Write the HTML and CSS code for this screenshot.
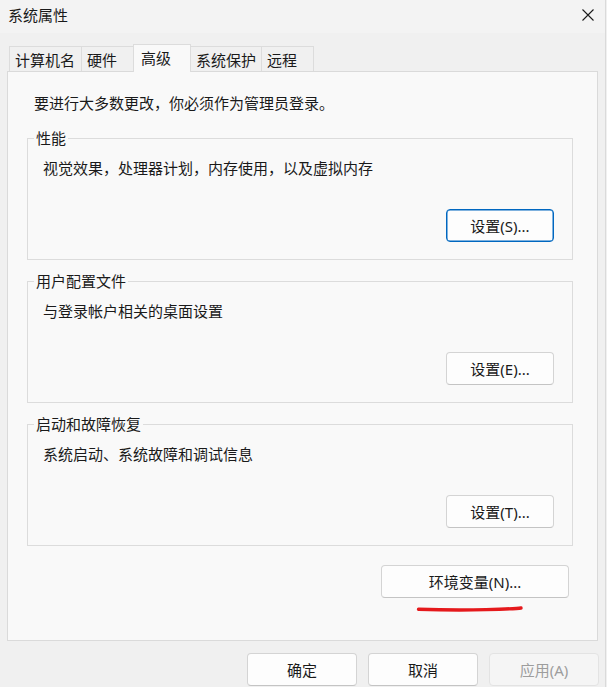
FILE: index.html
```html
<!DOCTYPE html>
<html lang="zh-CN">
<head>
<meta charset="utf-8">
<title>系统属性</title>
<link rel="stylesheet" href="styles.css">
</head>
<body>
<div class="window">
  <div class="titlebar">
    <span class="title">系统属性</span>
    <span class="close" aria-label="关闭">
      <svg width="12" height="12" viewBox="0 0 12 12"><path d="M0.5 0.5 L11.5 11.5 M11.5 0.5 L0.5 11.5" stroke="#1b1b1b" stroke-width="1.1" fill="none"/></svg>
    </span>
  </div>

  <div class="tabs">
    <div class="tab tab-computer">计算机名</div>
    <div class="tab tab-hardware">硬件</div>
    <div class="tab tab-advanced active">高级</div>
    <div class="tab tab-protect">系统保护</div>
    <div class="tab tab-remote">远程</div>
  </div>

  <div class="panel">
    <p class="intro">要进行大多数更改，你必须作为管理员登录。</p>

    <fieldset class="group">
      <legend>性能</legend>
      <p class="desc">视觉效果，处理器计划，内存使用，以及虚拟内存</p>
      <div class="group-actions"><button class="btn btn-default">设置(S)...</button></div>
    </fieldset>

    <fieldset class="group">
      <legend>用户配置文件</legend>
      <p class="desc">与登录帐户相关的桌面设置</p>
      <div class="group-actions"><button class="btn">设置(E)...</button></div>
    </fieldset>

    <fieldset class="group">
      <legend>启动和故障恢复</legend>
      <p class="desc">系统启动、系统故障和调试信息</p>
      <div class="group-actions"><button class="btn">设置(T)...</button></div>
    </fieldset>

    <div class="env-row"><button class="btn btn-env">环境变量(N)...</button></div>
    <div class="mark-row">
      <svg width="108" height="7" viewBox="0 0 108 7"><path d="M2.5 4.3 Q 40 5.4 70 4.6 T 105 3" stroke="#e5191c" stroke-width="3.4" stroke-linecap="round" fill="none"/></svg>
    </div>
  </div>

  <div class="footer">
    <button class="btn btn-footer">确定</button>
    <button class="btn btn-footer">取消</button>
    <button class="btn btn-footer btn-disabled" disabled>应用(A)</button>
  </div>
</div>
</body>
</html>
```

FILE: styles.css
```css
* { box-sizing: border-box; }

html, body {
  margin: 0;
  padding: 0;
  background: #f0f0f0;
  height: 687px;
  overflow: hidden;
}

body {
  font-family: "Noto Sans", "Noto Sans CJK SC", sans-serif;
  font-size: 15px;
  line-height: 20px;
  color: #1a1a1a;
}

.window {
  width: 606px;
  height: 687px;
  border-right: 1px solid #dadada;
  background: #f0f0f0;
}

.titlebar {
  height: 33px;
  background: #f3f3f3;
  display: flex;
  align-items: flex-start;
  justify-content: space-between;
  padding: 5px 0 0 8px;
}

.title {
  font-family: "Noto Sans CJK SC", sans-serif;
}

.close {
  display: flex;
  width: 12px;
  height: 12px;
  margin: 4px 11px 0 0;
}

.tabs {
  display: flex;
  align-items: flex-end;
  margin-top: 11px;
  padding-left: 9px;
  height: 27px;
}

.tab {
  height: 25px;
  border: 1px solid #dcdcdc;
  border-bottom: none;
  margin-right: -1px;
  padding: 3px 0 0 5px;
  background: #f0f0f0;
  white-space: nowrap;
  font-family: "Noto Sans CJK SC", sans-serif;
}

.tab-computer { width: 73px; }
.tab-hardware { width: 53px; }
.tab-advanced { width: 58px; }
.tab-protect { width: 72px; }
.tab-remote { width: 53px; }

.tab.active {
  height: 28px;
  margin-bottom: -1px;
  padding-left: 7px;
  background: #f9f9f9;
  position: relative;
  z-index: 1;
}

.panel {
  margin: 0 7px 0 7px;
  height: 570px;
  border: 1px solid #dadada;
  background: #f9f9f9;
  padding-top: 21px;
}

.intro {
  margin: 0 0 15px 26px;
  font-family: "Noto Sans CJK SC", sans-serif;
}

.group {
  margin: 0 24px 11px 19px;
  padding: 0 18px 17px 15px;
  border: 1px solid #dcdcdc;
  min-inline-size: 0;
}

.group legend {
  margin-left: -9px;
  padding: 0 2px;
  font-family: "Noto Sans CJK SC", sans-serif;
}

.desc {
  margin: 10px 0 0 0;
  font-family: "Noto Sans CJK SC", sans-serif;
}

.group-actions {
  display: flex;
  justify-content: flex-end;
  margin-top: 31px;
}

.btn {
  font-family: "Noto Sans", "Noto Sans CJK SC", sans-serif;
  font-size: 15px;
  line-height: 20px;
  color: #1a1a1a;
  height: 33px;
  width: 108px;
  padding: 0;
  background: #fdfdfd;
  border: 1px solid #d4d4d4;
  border-bottom-color: #c4c4c4;
  border-radius: 4px;
}

.btn-default {
  border: 1px solid #0067c0;
  box-shadow: inset 0 0 0 0.5px #0067c0;
}

.env-row {
  display: flex;
  justify-content: flex-end;
  margin: 19px 28px 0 0;
}

.btn-env {
  width: 188px;
}

.mark-row {
  display: flex;
  justify-content: flex-end;
  margin: 7px 73px 0 0;
}

.mark-row svg { display: block; }

.footer {
  display: flex;
  justify-content: flex-end;
  gap: 11px;
  margin: 12px 6px 0 0;
}

.btn-footer {
  width: 110px;
}

.btn-disabled {
  background: #f5f5f5;
  border-color: #e3e3e3;
  color: #9d9d9d;
}
```
